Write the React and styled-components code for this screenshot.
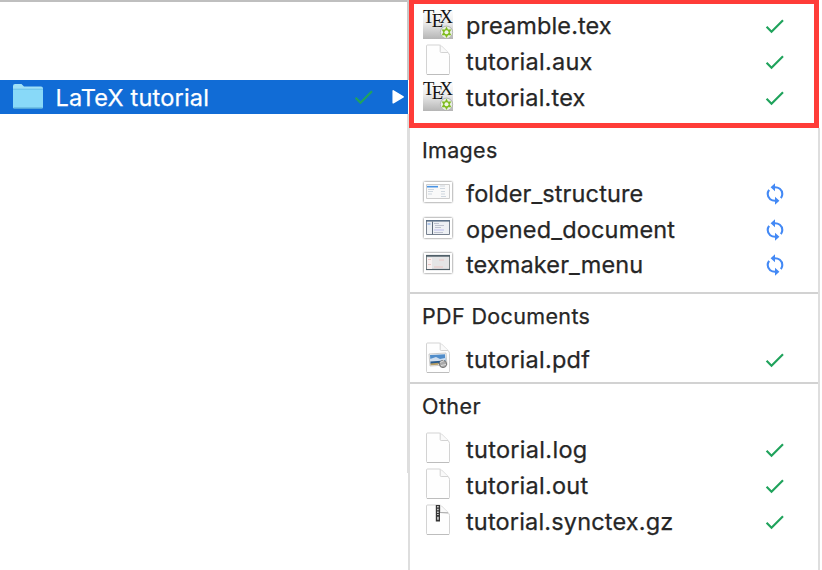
import React from "react";
import styled, { createGlobalStyle } from "styled-components";

const GlobalStyle = createGlobalStyle`
  * { box-sizing: border-box; }
  body { margin: 0; background: #fff; overflow: hidden; }
`;

const Browser = styled.main`
  display: flex;
  width: 822px;
  height: 570px;
  background: #fff;
  color: #262626;
  font-family: Inter, "Liberation Sans", sans-serif;
  font-size: 23.5px;
  -webkit-text-stroke: 0.25px currentColor;
`;

const FolderColumn = styled.nav`
  width: 408px;
  height: 570px;
  border-top: 2px solid #bfbfbf;
  padding-top: 78px;
`;

const FolderRow = styled.div`
  display: flex;
  align-items: center;
  height: 34px;
  padding: 0 3px 0 12px;
  background: #116cd6;
  color: #fff;
`;

const Label = styled.span`
  flex: 1;
  line-height: 36px;
  white-space: nowrap;
  letter-spacing: ${(p) => p.$spacing || 0}px;
`;

const FolderLabel = styled(Label)`
  margin-left: 11.5px;
  padding-top: 1px;
`;

const Arrow = styled.svg`
  margin-left: 17px;
`;

const Rail = styled.div`
  display: flex;
  flex-direction: column;
  width: 2px;
  margin-left: -1px;
`;

const RailPart = styled.div`
  height: ${(p) => p.$height}px;
  margin-left: ${(p) => p.$inset || 0}px;
  width: ${(p) => p.$width || 2}px;
  background: ${(p) => p.$tone};
`;

const FileColumn = styled.section`
  width: 411px;
  height: 570px;
`;

const Highlight = styled.div`
  width: 410px;
  height: 128px;
  border: 5px solid #ff3c38;
  border-top-width: 4px;
  padding: 4px 0 0;
`;

const Groups = styled.div`
  height: 442px;
  width: 411px;
  border-left: 1px solid #dedede;
  border-right: 2px solid #dedede;
`;

const Group = styled.div`
  height: ${(p) => p.$height}px;
  border-bottom: ${(p) => (p.$last ? "0" : "2px solid #d2d2d2")};
`;

const Heading = styled.h2`
  margin: 0;
  height: 48px;
  padding: 6px 0 0 12px;
  font-size: 21.5px;
  font-weight: 400;
  line-height: 32px;
  letter-spacing: ${(p) => p.$spacing}px;
`;

const FileRow = styled.div`
  display: flex;
  align-items: center;
  height: ${(p) => p.$height || 36}px;
  padding-left: ${(p) => (p.$framed ? 7 : 11)}px;
  padding-right: ${(p) => (p.$framed ? 28.5 : 32.5)}px;
`;

const IconSlot = styled.span`
  display: flex;
  justify-content: center;
  width: 34px;
  margin-right: 11px;
  padding-bottom: 4px;
`;

const StatusSlot = styled.span`
  display: flex;
  justify-content: center;
  width: 22px;
`;

const Check = () => (
  <svg width="22" height="22" viewBox="0 0 22 22">
    <path d="M2.6 11.8l4.9 4.9L19 5.2" fill="none" stroke="#20a35c" strokeWidth="2.2" />
  </svg>
);

const Sync = () => (
  <svg width="22" height="24" viewBox="0 0 22 24">
    <g fill="none" stroke="#4389f5" strokeWidth="2.1">
      <path d="M9 5.4C14.8 4.5 18.3 7.8 18.3 12c0 1.8-.4 2.8-1.4 4.2" />
      <path d="M13 18.6C7.2 19.5 3.7 16.2 3.7 12c0-1.8.4-2.8 1.4-4.2" />
    </g>
    <path d="M11 1.2v8L6.6 5.2zM11 14.8v8l4.4-4z" fill="#4389f5" />
  </svg>
);

const Folder = () => (
  <svg width="32" height="28" viewBox="0 0 32 28">
    <path d="M1 25V3q0-2 2-2h6.5l2.5 2.5h17q2 0 2 2v19z" fill="#9fe0f6" />
    <path d="M1 6h30v18q0 1.5-1.5 1.5h-27Q1 25.5 1 24z" fill="#88d9f8" />
    <path d="M1 6.2h30" stroke="#6cc2e8" />
    <path d="M1.5 25h29" stroke="#55a7d2" />
  </svg>
);

const TexSvg = styled.svg`
  overflow: visible;
`;

const TexIcon = () => (
  <TexSvg width="30" height="30" viewBox="0 0 30 30">
    <defs>
      <linearGradient id="tex-paper" x2="0" y2="1">
        <stop offset="0" stopColor="#fff" />
        <stop offset=".45" stopColor="#ececec" />
        <stop offset="1" stopColor="#b5b5b5" />
      </linearGradient>
    </defs>
    <path d="M0 0h30v30H0z" fill="url(#tex-paper)" />
    <text x="0" y="13.5" fill="#111" stroke="none" fontFamily="Liberation Serif, serif" fontSize="18.6">
      T<tspan dx="-2.6" dy="4.2">E</tspan><tspan dx="-3.6" dy="-4.2">X</tspan>
    </text>
    <circle cx="23.5" cy="23.3" r="6.2" fill="#e8eee2" stroke="#aaa" strokeWidth=".8" />
    <path d="M23.5 17.6l1.5 2.8h3.3l-1.6 2.9 1.6 2.9H25L23.5 29 22 26.2h-3.3l1.6-2.9-1.6-2.9H22z" fill="#80bc1f" />
    <circle cx="23.5" cy="23.3" r="2" fill="#f1f5e9" />
  </TexSvg>
);

const PageIcon = ({ kind }) => (
  <svg width="26" height="32" viewBox="0 0 26 32">
    <path d="M1.5 2q0-1 1-1h11.5q1.5 0 2.5 1l6.5 6.5q1.5 1.5 1.5 3v18q0 1-1 1h-21q-1 0-1-1z" fill="#fefefe" stroke="#d3d3d3" />
    <path d="M2 30.5h22" stroke="#bdbdbd" />
    <path d="M15.2 1.5v6q0 1 1 1h6.8" fill="#fafafa" stroke="#d3d3d3" />
    {kind === "pdf" && (
      <g>
        <path d="M4 12l17-1 1 12-17 1z" fill="#f8f8f8" stroke="#b8b8b8" strokeWidth=".7" />
        <path d="M5 13l15-.7.5 6.7-15 1z" fill="#518dca" />
        <path d="M5 17l6-2 4 2 5-1v3l-15 2z" fill="#d1dfef" />
        <path d="M5.4 19.5l14.8-1 .2 2.7-14.8 1z" fill="#27598d" />
        <path d="M5.5 21.5l8-.8v2l-8 .5z" fill="#b69c63" />
        <circle cx="18" cy="22" r="3.6" fill="#aaa" stroke="#777" />
        <path d="M15 20.5l4-2M16 23.5l5-1" stroke="#ddd" />
      </g>
    )}
    {kind === "zip" && (
      <g>
        <path d="M10.8 1h4.2v16.5h-4.2z" fill="#353535" />
        <path d="M12.9 2v9" stroke="#e2e2e2" strokeWidth="1.5" strokeDasharray="1.5 1.2" />
        <path d="M12.2 12.8h1.5v3h-1.5z" fill="#ddd" />
        <path d="M15 8.5l8 .5" stroke="#aaa" />
      </g>
    )}
  </svg>
);

const ThumbFrame = styled.svg`
  overflow: visible;
  filter: drop-shadow(0 0.8px 1.2px #555);
`;

const Thumb = ({ kind }) => (
  <ThumbFrame width="28" height="20" viewBox="0 0 28 20">
    <path d="M0 0h28v20H0z" fill="#fff" />
    {kind === "folders" && (
      <g>
        <path d="M2.5 2.5h23v14h-23z" fill="#f9f9f9" stroke="#cecece" />
        <path d="M3 4.7h11" stroke="#4a94e4" strokeWidth="1.6" />
        <path d="M4 7.5h6M4 9.5h5M4 12h4M16 4h5M16 6.5h5M17 9.5h4M17 12h4M17 14.5h5" stroke="#cfd7df" />
      </g>
    )}
    {kind === "document" && (
      <g>
        <path d="M2.5 2.5h23v14h-23z" fill="#edf0f4" stroke="#77818f" />
        <path d="M2 2.8h24" stroke="#596d84" strokeWidth="1.6" />
        <path d="M8.5 3.5v13" stroke="#5e6b7b" />
        <path d="M3.5 6h3" stroke="#6f9be3" />
        <path d="M10 5.5h5M11 7.5h9M11 9.5h6M10 14.5h9" stroke="#bec2cf" />
        <path d="M10 12h10" stroke="#bebdee" />
      </g>
    )}
    {kind === "menu" && (
      <g>
        <path d="M2.5 2.5h23v14h-23z" fill="#e5e5e6" stroke="#7a8384" />
        <path d="M2 2.8h24" stroke="#4f5f68" strokeWidth="1.8" />
        <path d="M2 16.5h24" stroke="#4f5f68" strokeWidth="1.2" />
        <path d="M3 5h5v11H3z" fill="#f8f1f1" />
        <path d="M4 6.5h3M4 11.5h3M15 7h5M10 14h9" stroke="#ebc6c4" />
      </g>
    )}
  </ThumbFrame>
);

const FileIcon = ({ kind }) => {
  if (kind === "tex") return <TexIcon />;
  if (["folders", "document", "menu"].includes(kind)) return <Thumb kind={kind} />;
  return <PageIcon kind={kind} />;
};

const File = ({ name, kind, spacing, height, framed, syncing }) => (
  <FileRow $height={height} $framed={framed}>
    <IconSlot><FileIcon kind={kind} /></IconSlot>
    <Label $spacing={spacing}>{name}</Label>
    <StatusSlot>{syncing ? <Sync /> : <Check />}</StatusSlot>
  </FileRow>
);

export default function App() {
  return (
    <>
      <GlobalStyle />
      <Browser>
        <FolderColumn>
          <FolderRow>
            <Folder />
            <FolderLabel $spacing={0.2}>LaTeX tutorial</FolderLabel>
            <Check />
            <Arrow width="13" height="16" viewBox="0 0 13 16">
              <path d="M1.2 1.8l10 6-10 6z" fill="#fff" stroke="#fff" strokeWidth="1.5" strokeLinejoin="round" />
            </Arrow>
          </FolderRow>
        </FolderColumn>
        <Rail>
          <RailPart $height={80} $tone="#c9c9c9" />
          <RailPart $height={34} $width={1} $tone="#116cd6" />
          <RailPart $height={359} $tone="#dedede" />
          <RailPart $height={97} $inset={1} $width={1} $tone="#dedede" />
        </Rail>
        <FileColumn>
          <Highlight>
            <File framed name="preamble.tex" kind="tex" spacing={0.1} />
            <File framed name="tutorial.aux" kind="page" spacing={0.25} />
            <File framed name="tutorial.tex" kind="tex" spacing={0.2} />
          </Highlight>
          <Groups>
            <Group $height={166}>
              <Heading $spacing={0.3}>Images</Heading>
              <File syncing name="folder_structure" kind="folders" spacing={0.12} />
              <File syncing name="opened_document" kind="document" spacing={0.18} />
              <File syncing name="texmaker_menu" kind="menu" spacing={0.12} height={34} />
            </Group>
            <Group $height={90}>
              <Heading $spacing={0.36}>PDF Documents</Heading>
              <File name="tutorial.pdf" kind="pdf" spacing={0.25} />
            </Group>
            <Group $height={186} $last>
              <Heading $spacing={0.45}>Other</Heading>
              <File name="tutorial.log" kind="page" spacing={0.3} />
              <File name="tutorial.out" kind="page" spacing={0.25} />
              <File name="tutorial.synctex.gz" kind="zip" spacing={0.17} />
            </Group>
          </Groups>
        </FileColumn>
      </Browser>
    </>
  );
}
